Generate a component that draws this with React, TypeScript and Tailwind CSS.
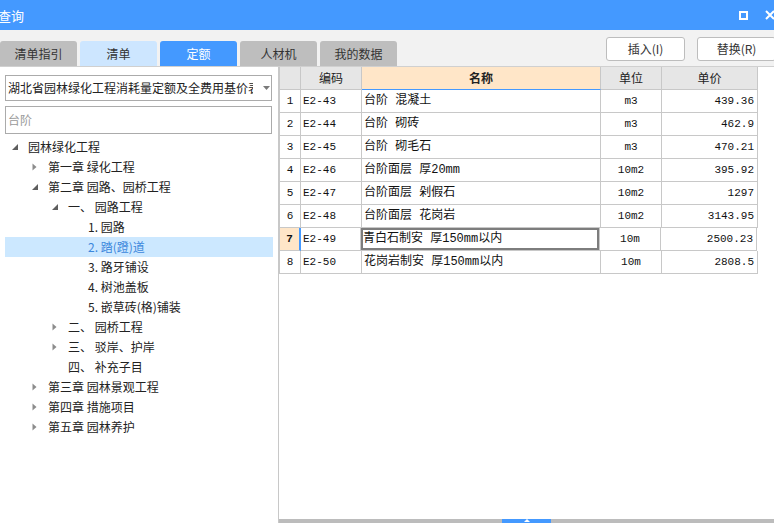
import { FC } from "react";

type TreeNode = {
  label: string;
  level: number;
  arrow?: "open" | "closed";
  active?: boolean;
};

const tree: TreeNode[] = [
  { label: "园林绿化工程", level: 0, arrow: "open" },
  { label: "第一章 绿化工程", level: 1, arrow: "closed" },
  { label: "第二章 园路、园桥工程", level: 1, arrow: "open" },
  { label: "一、 园路工程", level: 2, arrow: "open" },
  { label: "1. 园路", level: 3 },
  { label: "2. 踏(蹬)道", level: 3, active: true },
  { label: "3. 路牙铺设", level: 3 },
  { label: "4. 树池盖板", level: 3 },
  { label: "5. 嵌草砖(格)铺装", level: 3 },
  { label: "二、 园桥工程", level: 2, arrow: "closed" },
  { label: "三、 驳岸、护岸", level: 2, arrow: "closed" },
  { label: "四、 补充子目", level: 2 },
  { label: "第三章 园林景观工程", level: 1, arrow: "closed" },
  { label: "第四章 措施项目", level: 1, arrow: "closed" },
  { label: "第五章 园林养护", level: 1, arrow: "closed" },
];

const indent = ["pl-0", "pl-[20px]", "pl-[40px]", "pl-[60px]"];

const rows = [
  ["E2-43", "台阶 混凝土", "m3", "439.36"],
  ["E2-44", "台阶 砌砖", "m3", "462.9"],
  ["E2-45", "台阶 砌毛石", "m3", "470.21"],
  ["E2-46", "台阶面层 厚20mm", "10m2", "395.92"],
  ["E2-47", "台阶面层 剁假石", "10m2", "1297"],
  ["E2-48", "台阶面层 花岗岩", "10m2", "3143.95"],
  ["E2-49", "青白石制安 厚150mm以内", "10m", "2500.23"],
  ["E2-50", "花岗岩制安 厚150mm以内", "10m", "2808.5"],
];

const tabs = [
  { label: "清单指引", cls: "bg-[#bebebe] text-[#333]" },
  { label: "清单", cls: "bg-[#cde6ff] text-[#333]" },
  { label: "定额", cls: "bg-[#4499ff] text-white" },
  { label: "人材机", cls: "bg-[#bebebe] text-[#333]" },
  { label: "我的数据", cls: "bg-[#bebebe] text-[#333]" },
];

const Arrow: FC<{ kind?: "open" | "closed" }> = ({ kind }) => {
  if (kind === "closed")
    return (
      <svg width="5" height="8" viewBox="0 0 5 8" className="ml-[7px]">
        <path d="M0.5 0.5 L4.5 4 L0.5 7.5 Z" fill="#8c8c8c" />
      </svg>
    );
  if (kind === "open")
    return (
      <svg width="6" height="6" viewBox="0 0 6 6" className="ml-[7px]">
        <path d="M6 0 L6 6 L0 6 Z" fill="#5e5e5e" />
      </svg>
    );
  return null;
};

const mono = "font-['Liberation_Mono',monospace] text-[11px]";
const cell = "h-full border-r border-b border-[#c8c8c8] flex items-center shrink-0";

const App: FC = () => {
  return (
    <div className="w-[774px] h-[523px] overflow-hidden bg-white font-['Noto_Sans_CJK_SC','Noto_Sans',sans-serif] text-[12px] leading-none text-[#222]">
      {/* title bar */}
      <div className="h-[30px] bg-[#4499ff] flex items-center text-white">
        <span className="-ml-[2px] text-[13px]">查询</span>
        <div className="flex-1" />
        <div className="w-[9px] h-[9px] border-2 border-white shrink-0" />
        <svg width="10" height="10" viewBox="0 0 10 10" className="ml-[17px] -mr-[1px] shrink-0">
          <path d="M1 1 L9 9 M9 1 L1 9" stroke="white" strokeWidth="2" />
        </svg>
      </div>

      {/* toolbar */}
      <div className="h-[37px] bg-[#f2f2f2] border-b border-[#d0d0d0] flex justify-between">
        <div className="flex items-end gap-[3px]">
          {tabs.map((t) => (
            <div
              key={t.label}
              className={`w-[77px] h-[25px] rounded-t-[3px] flex items-center justify-center text-[12px] ${t.cls}`}
            >
              {t.label}
            </div>
          ))}
        </div>
        <div className="flex gap-[12px] mt-[7px] -mr-[2px] self-start">
          <button className="w-[79px] h-[24px] bg-white border border-[#bdbdbd] rounded-[3px] text-[12px] text-[#333]">
            插入(I)
          </button>
          <button className="w-[79px] h-[24px] bg-white border border-[#bdbdbd] rounded-[3px] text-[12px] text-[#333]">
            替换(R)
          </button>
        </div>
      </div>

      {/* main */}
      <div className="h-[456px] flex">
        {/* left panel */}
        <div className="w-[279px] shrink-0 border-r border-[#c8c8c8] pt-[8px] px-[5px]">
          <div className="w-[267px] h-[26px] border border-[#ababab] flex items-center">
            <span className="w-[245px] ml-[2px] overflow-hidden whitespace-nowrap">
              湖北省园林绿化工程消耗量定额及全费用基价表
            </span>
            <svg width="7" height="4" viewBox="0 0 7 4" className="ml-[10px]">
              <path d="M0 0 L7 0 L3.5 4 Z" fill="#7a7a7a" />
            </svg>
          </div>
          <div className="w-[267px] h-[28px] mt-[5px] border border-[#ababab] flex items-center pl-[2px] text-[#9a9a9a]">
            台阶
          </div>
          <div className="mt-[3px]">
            {tree.map((n) => (
              <div
                key={n.label}
                className={`h-[20px] flex items-center ${indent[n.level]} ${
                  n.active ? "bg-[#cce8ff] text-[#3b87dc]" : ""
                }`}
              >
                <span className="w-[23px] flex items-center">
                  <Arrow kind={n.arrow} />
                </span>
                <span className="whitespace-pre">{n.label}</span>
              </div>
            ))}
          </div>
        </div>

        {/* right panel */}
        <div className="flex-1 flex flex-col">
          <div className="flex-1 bg-white">
            {/* header */}
            <div className="h-[23px] flex text-[#222]">
              <div className={`${cell} w-[22px] border-l bg-[#e6e6e6]`} />
              <div className={`${cell} w-[61px] justify-center bg-[#e6e6e6]`}>编码</div>
              <div className={`${cell} w-[239px] justify-center bg-[#ffe6c8] font-bold border-b-[#4499ff]`}>
                名称
              </div>
              <div className={`${cell} w-[61px] justify-center bg-[#e6e6e6]`}>单位</div>
              <div className={`${cell} w-[96px] justify-center bg-[#e6e6e6]`}>单价</div>
            </div>
            {rows.map((r, i) => {
              const sel = i === 6;
              return (
                <div key={r[0]} className="h-[23px] flex text-[#111]">
                  <div
                    className={`${cell} w-[22px] border-l justify-center ${mono} ${
                      sel ? "bg-[#ffe6c8] font-bold border-r-2 border-r-[#4499ff]" : ""
                    }`}
                  >
                    {i + 1}
                  </div>
                  <div className={`${cell} ${sel ? "w-[60px]" : "w-[61px]"} pl-[2px] ${mono}`}>{r[0]}</div>
                  <div
                    className={`${cell} w-[239px] pl-[2px] whitespace-pre font-['Liberation_Mono','Noto_Sans_CJK_SC',monospace] text-[12px] ${
                      sel ? "shadow-[inset_0_0_0_2px_#7d7d7d]" : ""
                    }`}
                  >
                    {r[1]}
                  </div>
                  <div className={`${cell} w-[61px] justify-center ${mono}`}>{r[2]}</div>
                  <div className={`${cell} w-[96px] justify-end pr-[3px] ${mono}`}>{r[3]}</div>
                </div>
              );
            })}
          </div>
          <div className="h-[4px] bg-[#bcbcbc] flex">
            <div className="ml-[223px] w-[49px] h-full bg-[#4499ff] flex justify-center">
              <svg width="6" height="3" viewBox="0 0 6 3">
                <path d="M0 3 L3 0 L6 3 Z" fill="white" />
              </svg>
            </div>
          </div>
        </div>
      </div>
    </div>
  );
};

export default App;
